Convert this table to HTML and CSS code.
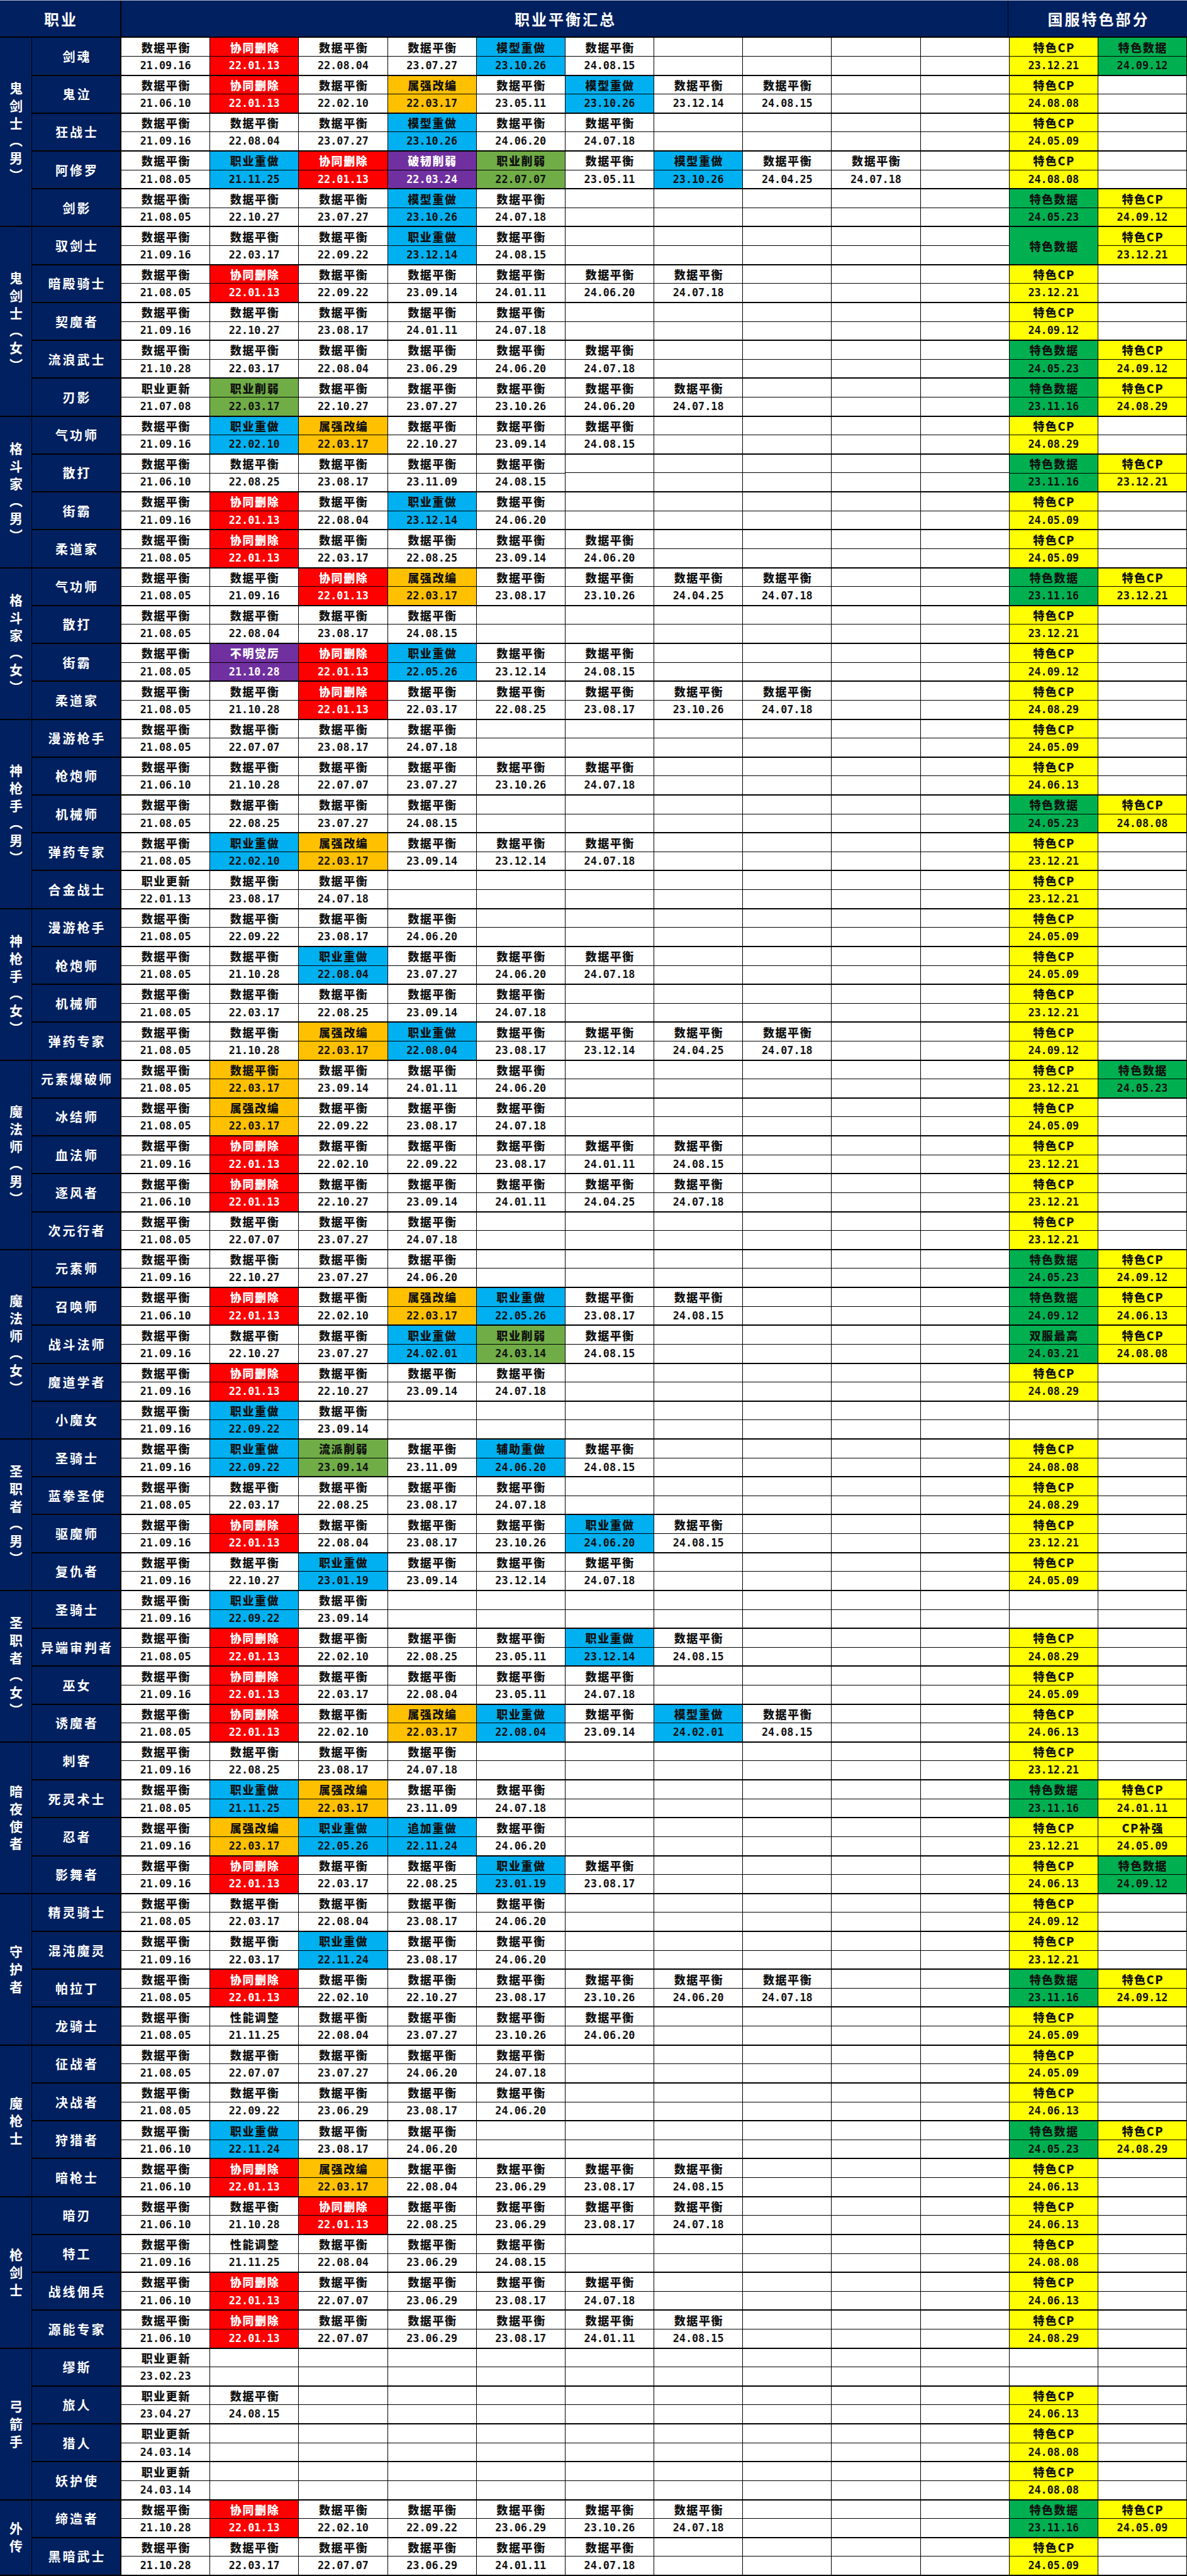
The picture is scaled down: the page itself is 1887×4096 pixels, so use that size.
FILE: index.html
```html
<!DOCTYPE html>
<html lang="zh-CN">
<head>
<meta charset="utf-8">
<title>职业平衡汇总</title>
<link rel="stylesheet" href="styles.css">
</head>
<body>
<div class="sheet">
<div class="hd"><div class="h1">职业</div><div class="h2">职业平衡汇总</div><div class="h3">国服特色部分</div></div>

<div class="grp"><div class="gn"><span>鬼剑士（男）</span></div><div class="rows">
<div class="row"><div class="cn">剑魂</div><p><b>数据平衡</b><b>21.09.16</b></p><p class="r"><b>协同删除</b><b>22.01.13</b></p><p><b>数据平衡</b><b>22.08.04</b></p><p><b>数据平衡</b><b>23.07.27</b></p><p class="u"><b>模型重做</b><b>23.10.26</b></p><p><b>数据平衡</b><b>24.08.15</b></p><p></p><p></p><p></p><p></p><p class="y"><b>特色CP</b><b>23.12.21</b></p><p class="k"><b>特色数据</b><b>24.09.12</b></p></div>
<div class="row"><div class="cn">鬼泣</div><p><b>数据平衡</b><b>21.06.10</b></p><p class="r"><b>协同删除</b><b>22.01.13</b></p><p><b>数据平衡</b><b>22.02.10</b></p><p class="o"><b>属强改编</b><b>22.03.17</b></p><p><b>数据平衡</b><b>23.05.11</b></p><p class="u"><b>模型重做</b><b>23.10.26</b></p><p><b>数据平衡</b><b>23.12.14</b></p><p><b>数据平衡</b><b>24.08.15</b></p><p></p><p></p><p class="y"><b>特色CP</b><b>24.08.08</b></p><p></p></div>
<div class="row"><div class="cn">狂战士</div><p><b>数据平衡</b><b>21.09.16</b></p><p><b>数据平衡</b><b>22.08.04</b></p><p><b>数据平衡</b><b>23.07.27</b></p><p class="u"><b>模型重做</b><b>23.10.26</b></p><p><b>数据平衡</b><b>24.06.20</b></p><p><b>数据平衡</b><b>24.07.18</b></p><p></p><p></p><p></p><p></p><p class="y"><b>特色CP</b><b>24.05.09</b></p><p></p></div>
<div class="row"><div class="cn">阿修罗</div><p><b>数据平衡</b><b>21.08.05</b></p><p class="u"><b>职业重做</b><b>21.11.25</b></p><p class="r"><b>协同删除</b><b>22.01.13</b></p><p class="v"><b>破韧削弱</b><b>22.03.24</b></p><p class="g"><b>职业削弱</b><b>22.07.07</b></p><p><b>数据平衡</b><b>23.05.11</b></p><p class="u"><b>模型重做</b><b>23.10.26</b></p><p><b>数据平衡</b><b>24.04.25</b></p><p><b>数据平衡</b><b>24.07.18</b></p><p></p><p class="y"><b>特色CP</b><b>24.08.08</b></p><p></p></div>
<div class="row"><div class="cn">剑影</div><p><b>数据平衡</b><b>21.08.05</b></p><p><b>数据平衡</b><b>22.10.27</b></p><p><b>数据平衡</b><b>23.07.27</b></p><p class="u"><b>模型重做</b><b>23.10.26</b></p><p><b>数据平衡</b><b>24.07.18</b></p><p></p><p></p><p></p><p></p><p></p><p class="k"><b>特色数据</b><b>24.05.23</b></p><p class="y"><b>特色CP</b><b>24.09.12</b></p></div>
</div></div>

<div class="grp"><div class="gn"><span>鬼剑士（女）</span></div><div class="rows">
<div class="row"><div class="cn">驭剑士</div><p><b>数据平衡</b><b>21.09.16</b></p><p><b>数据平衡</b><b>22.03.17</b></p><p><b>数据平衡</b><b>22.09.22</b></p><p class="u"><b>职业重做</b><b>23.12.14</b></p><p><b>数据平衡</b><b>24.08.15</b></p><p></p><p></p><p></p><p></p><p></p><p class="k"><b>特色数据</b></p><p class="y"><b>特色CP</b><b>23.12.21</b></p></div>
<div class="row"><div class="cn">暗殿骑士</div><p><b>数据平衡</b><b>21.08.05</b></p><p class="r"><b>协同删除</b><b>22.01.13</b></p><p><b>数据平衡</b><b>22.09.22</b></p><p><b>数据平衡</b><b>23.09.14</b></p><p><b>数据平衡</b><b>24.01.11</b></p><p><b>数据平衡</b><b>24.06.20</b></p><p><b>数据平衡</b><b>24.07.18</b></p><p></p><p></p><p></p><p class="y"><b>特色CP</b><b>23.12.21</b></p><p></p></div>
<div class="row"><div class="cn">契魔者</div><p><b>数据平衡</b><b>21.09.16</b></p><p><b>数据平衡</b><b>22.10.27</b></p><p><b>数据平衡</b><b>23.08.17</b></p><p><b>数据平衡</b><b>24.01.11</b></p><p><b>数据平衡</b><b>24.07.18</b></p><p></p><p></p><p></p><p></p><p></p><p class="y"><b>特色CP</b><b>24.09.12</b></p><p></p></div>
<div class="row"><div class="cn">流浪武士</div><p><b>数据平衡</b><b>21.10.28</b></p><p><b>数据平衡</b><b>22.03.17</b></p><p><b>数据平衡</b><b>22.08.04</b></p><p><b>数据平衡</b><b>23.06.29</b></p><p><b>数据平衡</b><b>24.06.20</b></p><p><b>数据平衡</b><b>24.07.18</b></p><p></p><p></p><p></p><p></p><p class="k"><b>特色数据</b><b>24.05.23</b></p><p class="y"><b>特色CP</b><b>24.09.12</b></p></div>
<div class="row"><div class="cn">刃影</div><p><b>职业更新</b><b>21.07.08</b></p><p class="g"><b>职业削弱</b><b>22.03.17</b></p><p><b>数据平衡</b><b>22.10.27</b></p><p><b>数据平衡</b><b>23.07.27</b></p><p><b>数据平衡</b><b>23.10.26</b></p><p><b>数据平衡</b><b>24.06.20</b></p><p><b>数据平衡</b><b>24.07.18</b></p><p></p><p></p><p></p><p class="k"><b>特色数据</b><b>23.11.16</b></p><p class="y"><b>特色CP</b><b>24.08.29</b></p></div>
</div></div>

<div class="grp"><div class="gn"><span>格斗家（男）</span></div><div class="rows">
<div class="row"><div class="cn">气功师</div><p><b>数据平衡</b><b>21.09.16</b></p><p class="u"><b>职业重做</b><b>22.02.10</b></p><p class="o"><b>属强改编</b><b>22.03.17</b></p><p><b>数据平衡</b><b>22.10.27</b></p><p><b>数据平衡</b><b>23.09.14</b></p><p><b>数据平衡</b><b>24.08.15</b></p><p></p><p></p><p></p><p></p><p class="y"><b>特色CP</b><b>24.08.29</b></p><p></p></div>
<div class="row"><div class="cn">散打</div><p><b>数据平衡</b><b>21.06.10</b></p><p><b>数据平衡</b><b>22.08.25</b></p><p><b>数据平衡</b><b>23.08.17</b></p><p><b>数据平衡</b><b>23.11.09</b></p><p><b>数据平衡</b><b>24.08.15</b></p><p></p><p></p><p></p><p></p><p></p><p class="k"><b>特色数据</b><b>23.11.16</b></p><p class="y"><b>特色CP</b><b>23.12.21</b></p></div>
<div class="row"><div class="cn">街霸</div><p><b>数据平衡</b><b>21.09.16</b></p><p class="r"><b>协同删除</b><b>22.01.13</b></p><p><b>数据平衡</b><b>22.08.04</b></p><p class="u"><b>职业重做</b><b>23.12.14</b></p><p><b>数据平衡</b><b>24.06.20</b></p><p></p><p></p><p></p><p></p><p></p><p class="y"><b>特色CP</b><b>24.05.09</b></p><p></p></div>
<div class="row"><div class="cn">柔道家</div><p><b>数据平衡</b><b>21.08.05</b></p><p class="r"><b>协同删除</b><b>22.01.13</b></p><p><b>数据平衡</b><b>22.03.17</b></p><p><b>数据平衡</b><b>22.08.25</b></p><p><b>数据平衡</b><b>23.09.14</b></p><p><b>数据平衡</b><b>24.06.20</b></p><p></p><p></p><p></p><p></p><p class="y"><b>特色CP</b><b>24.05.09</b></p><p></p></div>
</div></div>

<div class="grp"><div class="gn"><span>格斗家（女）</span></div><div class="rows">
<div class="row"><div class="cn">气功师</div><p><b>数据平衡</b><b>21.08.05</b></p><p><b>数据平衡</b><b>21.09.16</b></p><p class="r"><b>协同删除</b><b>22.01.13</b></p><p class="o"><b>属强改编</b><b>22.03.17</b></p><p><b>数据平衡</b><b>23.08.17</b></p><p><b>数据平衡</b><b>23.10.26</b></p><p><b>数据平衡</b><b>24.04.25</b></p><p><b>数据平衡</b><b>24.07.18</b></p><p></p><p></p><p class="k"><b>特色数据</b><b>23.11.16</b></p><p class="y"><b>特色CP</b><b>23.12.21</b></p></div>
<div class="row"><div class="cn">散打</div><p><b>数据平衡</b><b>21.08.05</b></p><p><b>数据平衡</b><b>22.08.04</b></p><p><b>数据平衡</b><b>23.08.17</b></p><p><b>数据平衡</b><b>24.08.15</b></p><p></p><p></p><p></p><p></p><p></p><p></p><p class="y"><b>特色CP</b><b>23.12.21</b></p><p></p></div>
<div class="row"><div class="cn">街霸</div><p><b>数据平衡</b><b>21.08.05</b></p><p class="v"><b>不明觉厉</b><b>21.10.28</b></p><p class="r"><b>协同删除</b><b>22.01.13</b></p><p class="u"><b>职业重做</b><b>22.05.26</b></p><p><b>数据平衡</b><b>23.12.14</b></p><p><b>数据平衡</b><b>24.08.15</b></p><p></p><p></p><p></p><p></p><p class="y"><b>特色CP</b><b>24.09.12</b></p><p></p></div>
<div class="row"><div class="cn">柔道家</div><p><b>数据平衡</b><b>21.08.05</b></p><p><b>数据平衡</b><b>21.10.28</b></p><p class="r"><b>协同删除</b><b>22.01.13</b></p><p><b>数据平衡</b><b>22.03.17</b></p><p><b>数据平衡</b><b>22.08.25</b></p><p><b>数据平衡</b><b>23.08.17</b></p><p><b>数据平衡</b><b>23.10.26</b></p><p><b>数据平衡</b><b>24.07.18</b></p><p></p><p></p><p class="y"><b>特色CP</b><b>24.08.29</b></p><p></p></div>
</div></div>

<div class="grp"><div class="gn"><span>神枪手（男）</span></div><div class="rows">
<div class="row"><div class="cn">漫游枪手</div><p><b>数据平衡</b><b>21.08.05</b></p><p><b>数据平衡</b><b>22.07.07</b></p><p><b>数据平衡</b><b>23.08.17</b></p><p><b>数据平衡</b><b>24.07.18</b></p><p></p><p></p><p></p><p></p><p></p><p></p><p class="y"><b>特色CP</b><b>24.05.09</b></p><p></p></div>
<div class="row"><div class="cn">枪炮师</div><p><b>数据平衡</b><b>21.06.10</b></p><p><b>数据平衡</b><b>21.10.28</b></p><p><b>数据平衡</b><b>22.07.07</b></p><p><b>数据平衡</b><b>23.07.27</b></p><p><b>数据平衡</b><b>23.10.26</b></p><p><b>数据平衡</b><b>24.07.18</b></p><p></p><p></p><p></p><p></p><p class="y"><b>特色CP</b><b>24.06.13</b></p><p></p></div>
<div class="row"><div class="cn">机械师</div><p><b>数据平衡</b><b>21.08.05</b></p><p><b>数据平衡</b><b>22.08.25</b></p><p><b>数据平衡</b><b>23.07.27</b></p><p><b>数据平衡</b><b>24.08.15</b></p><p></p><p></p><p></p><p></p><p></p><p></p><p class="k"><b>特色数据</b><b>24.05.23</b></p><p class="y"><b>特色CP</b><b>24.08.08</b></p></div>
<div class="row"><div class="cn">弹药专家</div><p><b>数据平衡</b><b>21.08.05</b></p><p class="u"><b>职业重做</b><b>22.02.10</b></p><p class="o"><b>属强改编</b><b>22.03.17</b></p><p><b>数据平衡</b><b>23.09.14</b></p><p><b>数据平衡</b><b>23.12.14</b></p><p><b>数据平衡</b><b>24.07.18</b></p><p></p><p></p><p></p><p></p><p class="y"><b>特色CP</b><b>23.12.21</b></p><p></p></div>
<div class="row"><div class="cn">合金战士</div><p><b>职业更新</b><b>22.01.13</b></p><p><b>数据平衡</b><b>23.08.17</b></p><p><b>数据平衡</b><b>24.07.18</b></p><p></p><p></p><p></p><p></p><p></p><p></p><p></p><p class="y"><b>特色CP</b><b>23.12.21</b></p><p></p></div>
</div></div>

<div class="grp"><div class="gn"><span>神枪手（女）</span></div><div class="rows">
<div class="row"><div class="cn">漫游枪手</div><p><b>数据平衡</b><b>21.08.05</b></p><p><b>数据平衡</b><b>22.09.22</b></p><p><b>数据平衡</b><b>23.08.17</b></p><p><b>数据平衡</b><b>24.06.20</b></p><p></p><p></p><p></p><p></p><p></p><p></p><p class="y"><b>特色CP</b><b>24.05.09</b></p><p></p></div>
<div class="row"><div class="cn">枪炮师</div><p><b>数据平衡</b><b>21.08.05</b></p><p><b>数据平衡</b><b>21.10.28</b></p><p class="u"><b>职业重做</b><b>22.08.04</b></p><p><b>数据平衡</b><b>23.07.27</b></p><p><b>数据平衡</b><b>24.06.20</b></p><p><b>数据平衡</b><b>24.07.18</b></p><p></p><p></p><p></p><p></p><p class="y"><b>特色CP</b><b>24.05.09</b></p><p></p></div>
<div class="row"><div class="cn">机械师</div><p><b>数据平衡</b><b>21.08.05</b></p><p><b>数据平衡</b><b>22.03.17</b></p><p><b>数据平衡</b><b>22.08.25</b></p><p><b>数据平衡</b><b>23.09.14</b></p><p><b>数据平衡</b><b>24.07.18</b></p><p></p><p></p><p></p><p></p><p></p><p class="y"><b>特色CP</b><b>23.12.21</b></p><p></p></div>
<div class="row"><div class="cn">弹药专家</div><p><b>数据平衡</b><b>21.08.05</b></p><p><b>数据平衡</b><b>21.10.28</b></p><p class="o"><b>属强改编</b><b>22.03.17</b></p><p class="u"><b>职业重做</b><b>22.08.04</b></p><p><b>数据平衡</b><b>23.08.17</b></p><p><b>数据平衡</b><b>23.12.14</b></p><p><b>数据平衡</b><b>24.04.25</b></p><p><b>数据平衡</b><b>24.07.18</b></p><p></p><p></p><p class="y"><b>特色CP</b><b>24.09.12</b></p><p></p></div>
</div></div>

<div class="grp"><div class="gn"><span>魔法师（男）</span></div><div class="rows">
<div class="row"><div class="cn">元素爆破师</div><p><b>数据平衡</b><b>21.08.05</b></p><p class="o"><b>数据平衡</b><b>22.03.17</b></p><p><b>数据平衡</b><b>23.09.14</b></p><p><b>数据平衡</b><b>24.01.11</b></p><p><b>数据平衡</b><b>24.06.20</b></p><p></p><p></p><p></p><p></p><p></p><p class="y"><b>特色CP</b><b>23.12.21</b></p><p class="k"><b>特色数据</b><b>24.05.23</b></p></div>
<div class="row"><div class="cn">冰结师</div><p><b>数据平衡</b><b>21.08.05</b></p><p class="o"><b>属强改编</b><b>22.03.17</b></p><p><b>数据平衡</b><b>22.09.22</b></p><p><b>数据平衡</b><b>23.08.17</b></p><p><b>数据平衡</b><b>24.07.18</b></p><p></p><p></p><p></p><p></p><p></p><p class="y"><b>特色CP</b><b>24.05.09</b></p><p></p></div>
<div class="row"><div class="cn">血法师</div><p><b>数据平衡</b><b>21.09.16</b></p><p class="r"><b>协同删除</b><b>22.01.13</b></p><p><b>数据平衡</b><b>22.02.10</b></p><p><b>数据平衡</b><b>22.09.22</b></p><p><b>数据平衡</b><b>23.08.17</b></p><p><b>数据平衡</b><b>24.01.11</b></p><p><b>数据平衡</b><b>24.08.15</b></p><p></p><p></p><p></p><p class="y"><b>特色CP</b><b>23.12.21</b></p><p></p></div>
<div class="row"><div class="cn">逐风者</div><p><b>数据平衡</b><b>21.06.10</b></p><p class="r"><b>协同删除</b><b>22.01.13</b></p><p><b>数据平衡</b><b>22.10.27</b></p><p><b>数据平衡</b><b>23.09.14</b></p><p><b>数据平衡</b><b>24.01.11</b></p><p><b>数据平衡</b><b>24.04.25</b></p><p><b>数据平衡</b><b>24.07.18</b></p><p></p><p></p><p></p><p class="y"><b>特色CP</b><b>23.12.21</b></p><p></p></div>
<div class="row"><div class="cn">次元行者</div><p><b>数据平衡</b><b>21.08.05</b></p><p><b>数据平衡</b><b>22.07.07</b></p><p><b>数据平衡</b><b>23.07.27</b></p><p><b>数据平衡</b><b>24.07.18</b></p><p></p><p></p><p></p><p></p><p></p><p></p><p class="y"><b>特色CP</b><b>23.12.21</b></p><p></p></div>
</div></div>

<div class="grp"><div class="gn"><span>魔法师（女）</span></div><div class="rows">
<div class="row"><div class="cn">元素师</div><p><b>数据平衡</b><b>21.09.16</b></p><p><b>数据平衡</b><b>22.10.27</b></p><p><b>数据平衡</b><b>23.07.27</b></p><p><b>数据平衡</b><b>24.06.20</b></p><p></p><p></p><p></p><p></p><p></p><p></p><p class="k"><b>特色数据</b><b>24.05.23</b></p><p class="y"><b>特色CP</b><b>24.09.12</b></p></div>
<div class="row"><div class="cn">召唤师</div><p><b>数据平衡</b><b>21.06.10</b></p><p class="r"><b>协同删除</b><b>22.01.13</b></p><p><b>数据平衡</b><b>22.02.10</b></p><p class="o"><b>属强改编</b><b>22.03.17</b></p><p class="u"><b>职业重做</b><b>22.05.26</b></p><p><b>数据平衡</b><b>23.08.17</b></p><p><b>数据平衡</b><b>24.08.15</b></p><p></p><p></p><p></p><p class="k"><b>特色数据</b><b>24.09.12</b></p><p class="y"><b>特色CP</b><b>24.06.13</b></p></div>
<div class="row"><div class="cn">战斗法师</div><p><b>数据平衡</b><b>21.09.16</b></p><p><b>数据平衡</b><b>22.10.27</b></p><p><b>数据平衡</b><b>23.07.27</b></p><p class="u"><b>职业重做</b><b>24.02.01</b></p><p class="g"><b>职业削弱</b><b>24.03.14</b></p><p><b>数据平衡</b><b>24.08.15</b></p><p></p><p></p><p></p><p></p><p class="k"><b>双服最高</b><b>24.03.21</b></p><p class="y"><b>特色CP</b><b>24.08.08</b></p></div>
<div class="row"><div class="cn">魔道学者</div><p><b>数据平衡</b><b>21.09.16</b></p><p class="r"><b>协同删除</b><b>22.01.13</b></p><p><b>数据平衡</b><b>22.10.27</b></p><p><b>数据平衡</b><b>23.09.14</b></p><p><b>数据平衡</b><b>24.07.18</b></p><p></p><p></p><p></p><p></p><p></p><p class="y"><b>特色CP</b><b>24.08.29</b></p><p></p></div>
<div class="row"><div class="cn">小魔女</div><p><b>数据平衡</b><b>21.09.16</b></p><p class="u"><b>职业重做</b><b>22.09.22</b></p><p><b>数据平衡</b><b>23.09.14</b></p><p></p><p></p><p></p><p></p><p></p><p></p><p></p><p></p><p></p></div>
</div></div>

<div class="grp"><div class="gn"><span>圣职者（男）</span></div><div class="rows">
<div class="row"><div class="cn">圣骑士</div><p><b>数据平衡</b><b>21.09.16</b></p><p class="u"><b>职业重做</b><b>22.09.22</b></p><p class="g"><b>流派削弱</b><b>23.09.14</b></p><p><b>数据平衡</b><b>23.11.09</b></p><p class="u"><b>辅助重做</b><b>24.06.20</b></p><p><b>数据平衡</b><b>24.08.15</b></p><p></p><p></p><p></p><p></p><p class="y"><b>特色CP</b><b>24.08.08</b></p><p></p></div>
<div class="row"><div class="cn">蓝拳圣使</div><p><b>数据平衡</b><b>21.08.05</b></p><p><b>数据平衡</b><b>22.03.17</b></p><p><b>数据平衡</b><b>22.08.25</b></p><p><b>数据平衡</b><b>23.08.17</b></p><p><b>数据平衡</b><b>24.07.18</b></p><p></p><p></p><p></p><p></p><p></p><p class="y"><b>特色CP</b><b>24.08.29</b></p><p></p></div>
<div class="row"><div class="cn">驱魔师</div><p><b>数据平衡</b><b>21.09.16</b></p><p class="r"><b>协同删除</b><b>22.01.13</b></p><p><b>数据平衡</b><b>22.08.04</b></p><p><b>数据平衡</b><b>23.08.17</b></p><p><b>数据平衡</b><b>23.10.26</b></p><p class="u"><b>职业重做</b><b>24.06.20</b></p><p><b>数据平衡</b><b>24.08.15</b></p><p></p><p></p><p></p><p class="y"><b>特色CP</b><b>23.12.21</b></p><p></p></div>
<div class="row"><div class="cn">复仇者</div><p><b>数据平衡</b><b>21.09.16</b></p><p><b>数据平衡</b><b>22.10.27</b></p><p class="u"><b>职业重做</b><b>23.01.19</b></p><p><b>数据平衡</b><b>23.09.14</b></p><p><b>数据平衡</b><b>23.12.14</b></p><p><b>数据平衡</b><b>24.07.18</b></p><p></p><p></p><p></p><p></p><p class="y"><b>特色CP</b><b>24.05.09</b></p><p></p></div>
</div></div>

<div class="grp"><div class="gn"><span>圣职者（女）</span></div><div class="rows">
<div class="row"><div class="cn">圣骑士</div><p><b>数据平衡</b><b>21.09.16</b></p><p class="u"><b>职业重做</b><b>22.09.22</b></p><p><b>数据平衡</b><b>23.09.14</b></p><p></p><p></p><p></p><p></p><p></p><p></p><p></p><p></p><p></p></div>
<div class="row"><div class="cn">异端审判者</div><p><b>数据平衡</b><b>21.08.05</b></p><p class="r"><b>协同删除</b><b>22.01.13</b></p><p><b>数据平衡</b><b>22.02.10</b></p><p><b>数据平衡</b><b>22.08.25</b></p><p><b>数据平衡</b><b>23.05.11</b></p><p class="u"><b>职业重做</b><b>23.12.14</b></p><p><b>数据平衡</b><b>24.08.15</b></p><p></p><p></p><p></p><p class="y"><b>特色CP</b><b>24.08.29</b></p><p></p></div>
<div class="row"><div class="cn">巫女</div><p><b>数据平衡</b><b>21.09.16</b></p><p class="r"><b>协同删除</b><b>22.01.13</b></p><p><b>数据平衡</b><b>22.03.17</b></p><p><b>数据平衡</b><b>22.08.04</b></p><p><b>数据平衡</b><b>23.05.11</b></p><p><b>数据平衡</b><b>24.07.18</b></p><p></p><p></p><p></p><p></p><p class="y"><b>特色CP</b><b>24.05.09</b></p><p></p></div>
<div class="row"><div class="cn">诱魔者</div><p><b>数据平衡</b><b>21.08.05</b></p><p class="r"><b>协同删除</b><b>22.01.13</b></p><p><b>数据平衡</b><b>22.02.10</b></p><p class="o"><b>属强改编</b><b>22.03.17</b></p><p class="u"><b>职业重做</b><b>22.08.04</b></p><p><b>数据平衡</b><b>23.09.14</b></p><p class="u"><b>模型重做</b><b>24.02.01</b></p><p><b>数据平衡</b><b>24.08.15</b></p><p></p><p></p><p class="y"><b>特色CP</b><b>24.06.13</b></p><p></p></div>
</div></div>

<div class="grp"><div class="gn"><span>暗夜使者</span></div><div class="rows">
<div class="row"><div class="cn">刺客</div><p><b>数据平衡</b><b>21.09.16</b></p><p><b>数据平衡</b><b>22.08.25</b></p><p><b>数据平衡</b><b>23.08.17</b></p><p><b>数据平衡</b><b>24.07.18</b></p><p></p><p></p><p></p><p></p><p></p><p></p><p class="y"><b>特色CP</b><b>23.12.21</b></p><p></p></div>
<div class="row"><div class="cn">死灵术士</div><p><b>数据平衡</b><b>21.08.05</b></p><p class="u"><b>职业重做</b><b>21.11.25</b></p><p class="o"><b>属强改编</b><b>22.03.17</b></p><p><b>数据平衡</b><b>23.11.09</b></p><p><b>数据平衡</b><b>24.07.18</b></p><p></p><p></p><p></p><p></p><p></p><p class="k"><b>特色数据</b><b>23.11.16</b></p><p class="y"><b>特色CP</b><b>24.01.11</b></p></div>
<div class="row"><div class="cn">忍者</div><p><b>数据平衡</b><b>21.09.16</b></p><p class="o"><b>属强改编</b><b>22.03.17</b></p><p class="u"><b>职业重做</b><b>22.05.26</b></p><p class="u"><b>追加重做</b><b>22.11.24</b></p><p><b>数据平衡</b><b>24.06.20</b></p><p></p><p></p><p></p><p></p><p></p><p class="y"><b>特色CP</b><b>23.12.21</b></p><p class="y"><b>CP补强</b><b>24.05.09</b></p></div>
<div class="row"><div class="cn">影舞者</div><p><b>数据平衡</b><b>21.09.16</b></p><p class="r"><b>协同删除</b><b>22.01.13</b></p><p><b>数据平衡</b><b>22.03.17</b></p><p><b>数据平衡</b><b>22.08.25</b></p><p class="u"><b>职业重做</b><b>23.01.19</b></p><p><b>数据平衡</b><b>23.08.17</b></p><p></p><p></p><p></p><p></p><p class="y"><b>特色CP</b><b>24.06.13</b></p><p class="k"><b>特色数据</b><b>24.09.12</b></p></div>
</div></div>

<div class="grp"><div class="gn"><span>守护者</span></div><div class="rows">
<div class="row"><div class="cn">精灵骑士</div><p><b>数据平衡</b><b>21.08.05</b></p><p><b>数据平衡</b><b>22.03.17</b></p><p><b>数据平衡</b><b>22.08.04</b></p><p><b>数据平衡</b><b>23.08.17</b></p><p><b>数据平衡</b><b>24.06.20</b></p><p></p><p></p><p></p><p></p><p></p><p class="y"><b>特色CP</b><b>24.09.12</b></p><p></p></div>
<div class="row"><div class="cn">混沌魔灵</div><p><b>数据平衡</b><b>21.09.16</b></p><p><b>数据平衡</b><b>22.03.17</b></p><p class="u"><b>职业重做</b><b>22.11.24</b></p><p><b>数据平衡</b><b>23.08.17</b></p><p><b>数据平衡</b><b>24.06.20</b></p><p></p><p></p><p></p><p></p><p></p><p class="y"><b>特色CP</b><b>23.12.21</b></p><p></p></div>
<div class="row"><div class="cn">帕拉丁</div><p><b>数据平衡</b><b>21.08.05</b></p><p class="r"><b>协同删除</b><b>22.01.13</b></p><p><b>数据平衡</b><b>22.02.10</b></p><p><b>数据平衡</b><b>22.10.27</b></p><p><b>数据平衡</b><b>23.08.17</b></p><p><b>数据平衡</b><b>23.10.26</b></p><p><b>数据平衡</b><b>24.06.20</b></p><p><b>数据平衡</b><b>24.07.18</b></p><p></p><p></p><p class="k"><b>特色数据</b><b>23.11.16</b></p><p class="y"><b>特色CP</b><b>24.09.12</b></p></div>
<div class="row"><div class="cn">龙骑士</div><p><b>数据平衡</b><b>21.08.05</b></p><p><b>性能调整</b><b>21.11.25</b></p><p><b>数据平衡</b><b>22.08.04</b></p><p><b>数据平衡</b><b>23.07.27</b></p><p><b>数据平衡</b><b>23.10.26</b></p><p><b>数据平衡</b><b>24.06.20</b></p><p></p><p></p><p></p><p></p><p class="y"><b>特色CP</b><b>24.05.09</b></p><p></p></div>
</div></div>

<div class="grp"><div class="gn"><span>魔枪士</span></div><div class="rows">
<div class="row"><div class="cn">征战者</div><p><b>数据平衡</b><b>21.08.05</b></p><p><b>数据平衡</b><b>22.07.07</b></p><p><b>数据平衡</b><b>23.07.27</b></p><p><b>数据平衡</b><b>24.06.20</b></p><p><b>数据平衡</b><b>24.07.18</b></p><p></p><p></p><p></p><p></p><p></p><p class="y"><b>特色CP</b><b>24.05.09</b></p><p></p></div>
<div class="row"><div class="cn">决战者</div><p><b>数据平衡</b><b>21.08.05</b></p><p><b>数据平衡</b><b>22.09.22</b></p><p><b>数据平衡</b><b>23.06.29</b></p><p><b>数据平衡</b><b>23.08.17</b></p><p><b>数据平衡</b><b>24.06.20</b></p><p></p><p></p><p></p><p></p><p></p><p class="y"><b>特色CP</b><b>24.06.13</b></p><p></p></div>
<div class="row"><div class="cn">狩猎者</div><p><b>数据平衡</b><b>21.06.10</b></p><p class="u"><b>职业重做</b><b>22.11.24</b></p><p><b>数据平衡</b><b>23.08.17</b></p><p><b>数据平衡</b><b>24.06.20</b></p><p></p><p></p><p></p><p></p><p></p><p></p><p class="k"><b>特色数据</b><b>24.05.23</b></p><p class="y"><b>特色CP</b><b>24.08.29</b></p></div>
<div class="row"><div class="cn">暗枪士</div><p><b>数据平衡</b><b>21.06.10</b></p><p class="r"><b>协同删除</b><b>22.01.13</b></p><p class="o"><b>属强改编</b><b>22.03.17</b></p><p><b>数据平衡</b><b>22.08.04</b></p><p><b>数据平衡</b><b>23.06.29</b></p><p><b>数据平衡</b><b>23.08.17</b></p><p><b>数据平衡</b><b>24.08.15</b></p><p></p><p></p><p></p><p class="y"><b>特色CP</b><b>24.06.13</b></p><p></p></div>
</div></div>

<div class="grp"><div class="gn"><span>枪剑士</span></div><div class="rows">
<div class="row"><div class="cn">暗刃</div><p><b>数据平衡</b><b>21.06.10</b></p><p><b>数据平衡</b><b>21.10.28</b></p><p class="r"><b>协同删除</b><b>22.01.13</b></p><p><b>数据平衡</b><b>22.08.25</b></p><p><b>数据平衡</b><b>23.06.29</b></p><p><b>数据平衡</b><b>23.08.17</b></p><p><b>数据平衡</b><b>24.07.18</b></p><p></p><p></p><p></p><p class="y"><b>特色CP</b><b>24.06.13</b></p><p></p></div>
<div class="row"><div class="cn">特工</div><p><b>数据平衡</b><b>21.09.16</b></p><p><b>性能调整</b><b>21.11.25</b></p><p><b>数据平衡</b><b>22.08.04</b></p><p><b>数据平衡</b><b>23.06.29</b></p><p><b>数据平衡</b><b>24.08.15</b></p><p></p><p></p><p></p><p></p><p></p><p class="y"><b>特色CP</b><b>24.08.08</b></p><p></p></div>
<div class="row"><div class="cn">战线佣兵</div><p><b>数据平衡</b><b>21.06.10</b></p><p class="r"><b>协同删除</b><b>22.01.13</b></p><p><b>数据平衡</b><b>22.07.07</b></p><p><b>数据平衡</b><b>23.06.29</b></p><p><b>数据平衡</b><b>23.08.17</b></p><p><b>数据平衡</b><b>24.07.18</b></p><p></p><p></p><p></p><p></p><p class="y"><b>特色CP</b><b>24.06.13</b></p><p></p></div>
<div class="row"><div class="cn">源能专家</div><p><b>数据平衡</b><b>21.06.10</b></p><p class="r"><b>协同删除</b><b>22.01.13</b></p><p><b>数据平衡</b><b>22.07.07</b></p><p><b>数据平衡</b><b>23.06.29</b></p><p><b>数据平衡</b><b>23.08.17</b></p><p><b>数据平衡</b><b>24.01.11</b></p><p><b>数据平衡</b><b>24.08.15</b></p><p></p><p></p><p></p><p class="y"><b>特色CP</b><b>24.08.29</b></p><p></p></div>
</div></div>

<div class="grp"><div class="gn"><span>弓箭手</span></div><div class="rows">
<div class="row"><div class="cn">缪斯</div><p><b>职业更新</b><b>23.02.23</b></p><p></p><p></p><p></p><p></p><p></p><p></p><p></p><p></p><p></p><p></p><p></p></div>
<div class="row"><div class="cn">旅人</div><p><b>职业更新</b><b>23.04.27</b></p><p><b>数据平衡</b><b>24.08.15</b></p><p></p><p></p><p></p><p></p><p></p><p></p><p></p><p></p><p class="y"><b>特色CP</b><b>24.06.13</b></p><p></p></div>
<div class="row"><div class="cn">猎人</div><p><b>职业更新</b><b>24.03.14</b></p><p></p><p></p><p></p><p></p><p></p><p></p><p></p><p></p><p></p><p class="y"><b>特色CP</b><b>24.08.08</b></p><p></p></div>
<div class="row"><div class="cn">妖护使</div><p><b>职业更新</b><b>24.03.14</b></p><p></p><p></p><p></p><p></p><p></p><p></p><p></p><p></p><p></p><p class="y"><b>特色CP</b><b>24.08.08</b></p><p></p></div>
</div></div>

<div class="grp"><div class="gn"><span>外传</span></div><div class="rows">
<div class="row"><div class="cn">缔造者</div><p><b>数据平衡</b><b>21.10.28</b></p><p class="r"><b>协同删除</b><b>22.01.13</b></p><p><b>数据平衡</b><b>22.02.10</b></p><p><b>数据平衡</b><b>22.09.22</b></p><p><b>数据平衡</b><b>23.06.29</b></p><p><b>数据平衡</b><b>23.10.26</b></p><p><b>数据平衡</b><b>24.07.18</b></p><p></p><p></p><p></p><p class="k"><b>特色数据</b><b>23.11.16</b></p><p class="y"><b>特色CP</b><b>24.05.09</b></p></div>
<div class="row"><div class="cn">黑暗武士</div><p><b>数据平衡</b><b>21.10.28</b></p><p><b>数据平衡</b><b>22.03.17</b></p><p><b>数据平衡</b><b>22.07.07</b></p><p><b>数据平衡</b><b>23.06.29</b></p><p><b>数据平衡</b><b>24.01.11</b></p><p><b>数据平衡</b><b>24.07.18</b></p><p></p><p></p><p></p><p></p><p class="y"><b>特色CP</b><b>24.05.09</b></p><p></p></div>
</div></div>
</div>
</body>
</html>
```

FILE: styles.css
```css
* {
  box-sizing: border-box;
  margin: 0;
  padding: 0;
}

body {
  width: 1887px;
  background: #ffffff;
  color: #111111;
  font-family: "Noto Sans CJK SC", "Noto Sans", sans-serif;
  font-weight: 700;
}

.sheet {
  width: 1887px;
  border-top: 1px solid #aab3c9;
}

/* header */
.hd {
  display: flex;
  height: 59.3px;
  background: #002060;
  color: #ffffff;
  border-bottom: 2px solid #000000;
  font-size: 24px;
  letter-spacing: 3px;
}

.hd div {
  display: flex;
  align-items: center;
  justify-content: center;
  padding-left: 3px;
}

.h1 {
  width: 193px;
  flex: none;
  border-right: 2px solid #000000;
}

.h2 {
  flex: 1;
  border-right: 1px solid #000000;
}

.h3 {
  width: 284px;
  flex: none;
}

/* groups */
.grp {
  display: flex;
}

.gn {
  width: 51px;
  flex: none;
  background: #002060;
  color: #ffffff;
  border-right: 1px solid #000000;
  border-bottom: 2px solid #000000;
  display: flex;
  align-items: center;
  justify-content: center;
}

.gn span {
  writing-mode: vertical-rl;
  font-size: 21px;
  letter-spacing: 6.6px;
  padding-top: 6.6px;
  line-height: 1;
}

.rows {
  flex: 1;
  min-width: 0;
}

.row {
  display: flex;
  height: 60.235px;
  border-bottom: 2px solid #000000;
}

.cn {
  width: 142px;
  flex: none;
  background: #002060;
  color: #ffffff;
  border-right: 2px solid #000000;
  display: flex;
  align-items: center;
  justify-content: center;
  font-size: 20px;
  letter-spacing: 3px;
  padding-left: 3px;
  white-space: nowrap;
}

/* cells */
.row p {
  flex: 1;
  min-width: 0;
  display: flex;
  flex-direction: column;
  border-right: 1px solid #000000;
}

.row p:empty {
  background: linear-gradient(#000000, #000000) 0 50% / 100% 1px no-repeat;
}

.row b {
  flex: 1;
  display: flex;
  align-items: center;
  justify-content: center;
  font-size: 18px;
  letter-spacing: 1.6px;
  padding-left: 1.6px;
  white-space: nowrap;
  line-height: 1;
}

.row b + b {
  border-top: 1px solid #000000;
  font-family: "DejaVu Sans Mono", "Liberation Mono", monospace;
  font-size: 16.8px;
  letter-spacing: 0;
  padding-left: 0;
}

/* fills */
.r {
  background: #ff0000;
  color: #ffffff;
}

.o {
  background: #ffc000;
}

.u {
  background: #00b0f0;
}

.v {
  background: #7030a0;
  color: #ffffff;
}

.g {
  background: #70ad47;
}

.y {
  background: #ffff00;
}

.k {
  background: #00b050;
}
```
